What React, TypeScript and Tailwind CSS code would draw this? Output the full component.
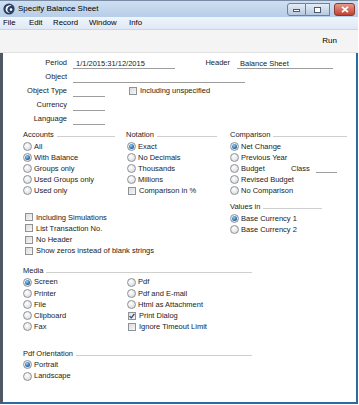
import React from 'react';

const FONT = { fontFamily: '"Liberation Sans", Arial, sans-serif' };

function Radio({ label, checked = false }: { label: string; checked?: boolean }) {
  return (
    <div className="flex items-center h-[11.2px]">
      <span className="w-[9px] h-[9px] rounded-full border border-[#8f9296] bg-[radial-gradient(circle_at_40%_35%,#ffffff,#d2d4d8)] flex items-center justify-center shrink-0">
        {checked && (
          <span className="w-[5px] h-[5px] rounded-full bg-[radial-gradient(circle_at_40%_35%,#8fd0ff,#1a5c9c_70%)]" />
        )}
      </span>
      <span className="ml-[2px] whitespace-nowrap">{label}</span>
    </div>
  );
}

function Check({ label, checked = false }: { label: string; checked?: boolean }) {
  return (
    <div className="flex items-center h-[11.2px]">
      <span className="w-[8px] h-[8px] border border-[#8f9296] bg-gradient-to-br from-[#dcdcdc] to-[#f7f7f7] flex items-center justify-center shrink-0">
        {checked && (
          <svg width="6" height="6" viewBox="0 0 6 6">
            <path d="M0.6 3.1 L2.3 4.9 L5.4 0.8" fill="none" stroke="#2a3f6e" strokeWidth="1.2" />
          </svg>
        )}
      </span>
      <span className="ml-[3px] whitespace-nowrap">{label}</span>
    </div>
  );
}

function Heading({ label }: { label: string }) {
  return (
    <div className="flex items-center h-[11.2px]">
      <span className="whitespace-nowrap">{label}</span>
      <span className="flex-1 h-px bg-[#cfcfcf] ml-[3px] mt-[4px]" />
    </div>
  );
}

function Field({ width, value }: { width: string; value?: string }) {
  return (
    <div className={`${width} h-[11px] border-b border-[#9d9d9d] pl-[3px] leading-[11px] whitespace-nowrap`}>
      {value}
    </div>
  );
}

function Row({ label, children }: { label: string; children: React.ReactNode }) {
  return (
    <div className="flex items-center h-[14px]">
      <div className="w-[64px] text-right whitespace-nowrap">{label}</div>
      <div className="ml-[6px] flex items-center">{children}</div>
    </div>
  );
}

function Logo() {
  return (
    <svg width="12" height="12" viewBox="0 0 12 12">
      <circle cx="6" cy="6" r="5.6" fill="#2c3f66" />
      <path d="M8.8 2.6 C6 1.4 2.6 3 2.6 6.2 C2.6 8.6 4.8 10 7 9.6 C4.8 9.2 4 7.6 4.4 6 C4.9 4 6.8 2.9 8.8 2.6 Z" fill="#ffffff" />
      <circle cx="8" cy="6.6" r="1.3" fill="#ffffff" />
    </svg>
  );
}

export default function App() {
  return (
    <div className="w-[359px] h-[405px] bg-white text-[#1b1b1b] text-[7.5px] overflow-hidden" style={FONT}>
      <div className="w-[358px] h-[404px] flex flex-col">
        {/* Title bar */}
        <div className="h-[17px] flex items-center bg-gradient-to-b from-[#cfdff1] to-[#b7cee8] border-t border-[#7a8ca3] pl-[3px] pr-[3px]">
          <Logo />
          <span className="ml-[3px] text-[8px] text-black">Specify Balance Sheet</span>
          <div className="ml-auto flex items-start h-[14px] mt-[2px]">
            <div className="w-[19px] h-[13px] rounded-l-[3px] border border-[#6f819a] bg-gradient-to-b from-[#e4edf7] to-[#b5c8df] flex items-end justify-center pb-[3px]">
              <span className="w-[7px] h-[3px] bg-white border border-[#4a5a70]" />
            </div>
            <div className="w-[24px] h-[13px] border border-l-0 border-[#6f819a] bg-gradient-to-b from-[#e4edf7] to-[#b5c8df] flex items-center justify-center">
              <span className="w-[7px] h-[6px] border-[1.5px] border-[#4a5a70] bg-white" />
            </div>
            <div className="ml-[4px] w-[21px] h-[13px] rounded-[3px] border border-[#8a3a30] bg-gradient-to-b from-[#e49a8c] to-[#c0402f] flex items-center justify-center">
              <svg width="8" height="7" viewBox="0 0 8 7">
                <path d="M1 0.8 L7 6.2 M7 0.8 L1 6.2" stroke="#ffffff" strokeWidth="1.8" />
              </svg>
            </div>
          </div>
        </div>

        {/* Menu bar */}
        <div className="h-[13px] flex items-center bg-gradient-to-b from-[#f1f5fb] to-[#dfe8f4] border-b border-[#c9d6e6] pl-[3px] text-[7.8px] text-black">
          <span className="w-[26px]">File</span>
          <span className="w-[24px]">Edit</span>
          <span className="w-[36px]">Record</span>
          <span className="w-[40px]">Window</span>
          <span>Info</span>
        </div>

        {/* Toolbar */}
        <div className="h-[23px] flex items-end justify-end bg-[#f4f4f4] border-b border-[#e2e2e2] pr-[21px] pb-[5px] text-[8px] text-black">
          <span>Run</span>
        </div>

        {/* Content */}
        <div className="flex-1 bg-white border-l-[3px] border-l-[#4f5863] border-r-2 border-r-[#2a6ba3] border-b-2 border-b-[#2a6ba3] pt-[3px]">
          <Row label="Period">
            <Field width="w-[102px]" value="1/1/2015:31/12/2015" />
            <div className="w-[55px] text-right">Header</div>
            <div className="ml-[7px]">
              <Field width="w-[96px]" value="Balance Sheet" />
            </div>
          </Row>
          <Row label="Object">
            <Field width="w-[172px]" />
          </Row>
          <Row label="Object Type">
            <Field width="w-[32px]" />
            <div className="ml-[24px]">
              <Check label="Including unspecified" />
            </div>
          </Row>
          <Row label="Currency">
            <Field width="w-[32px]" />
          </Row>
          <Row label="Language">
            <Field width="w-[32px]" />
          </Row>

          {/* Accounts / Notation / Comparison */}
          <div className="flex pl-[20px] mt-[3.4px]">
            <div className="w-[103px] pr-[11px]">
              <Heading label="Accounts" />
              <Radio label="All" />
              <Radio label="With Balance" checked />
              <Radio label="Groups only" />
              <Radio label="Used Groups only" />
              <Radio label="Used only" />
            </div>
            <div className="w-[104px] pr-[13px]">
              <Heading label="Notation" />
              <div className="pl-[1px]">
                <Radio label="Exact" checked />
                <Radio label="No Decimals" />
                <Radio label="Thousands" />
                <Radio label="Millions" />
                <div className="pl-[1px]">
                  <Check label="Comparison in %" />
                </div>
              </div>
            </div>
            <div className="w-[117px]">
              <Heading label="Comparison" />
              <Radio label="Net Change" checked />
              <Radio label="Previous Year" />
              <div className="flex items-center">
                <div className="w-[61px]">
                  <Radio label="Budget" />
                </div>
                <span className="w-[25px]">Class</span>
                <span className="w-[21px] h-[8px] border-b border-[#9d9d9d]" />
              </div>
              <Radio label="Revised Budget" />
              <Radio label="No Comparison" />
            </div>
          </div>

          {/* Options / Values in */}
          <div className="flex pl-[20px]">
            <div className="w-[207px] pt-[15px] pl-[2px]">
              <Check label="Including Simulations" />
              <Check label="List Transaction No." />
              <Check label="No Header" />
              <Check label="Show zeros instead of blank strings" />
            </div>
            <div className="w-[117px] pr-[25px] pt-[4.8px]">
              <Heading label="Values in" />
              <Radio label="Base Currency 1" checked />
              <Radio label="Base Currency 2" />
            </div>
          </div>

          {/* Media */}
          <div className="w-[249px] pl-[20px] mt-[8.9px]">
            <Heading label="Media" />
            <div className="flex">
              <div className="w-[104px]">
                <Radio label="Screen" checked />
                <Radio label="Printer" />
                <Radio label="File" />
                <Radio label="Clipboard" />
                <Radio label="Fax" />
              </div>
              <div>
                <Radio label="Pdf" />
                <Radio label="Pdf and E-mail" />
                <Radio label="Html as Attachment" />
                <div className="pl-[1px]">
                  <Check label="Print Dialog" checked />
                  <Check label="Ignore Timeout Limit" />
                </div>
              </div>
            </div>
          </div>

          {/* Pdf Orientation */}
          <div className="w-[249px] pl-[20px] mt-[15.8px]">
            <Heading label="Pdf Orientation" />
            <Radio label="Portrait" checked />
            <Radio label="Landscape" />
          </div>
        </div>
      </div>
    </div>
  );
}
